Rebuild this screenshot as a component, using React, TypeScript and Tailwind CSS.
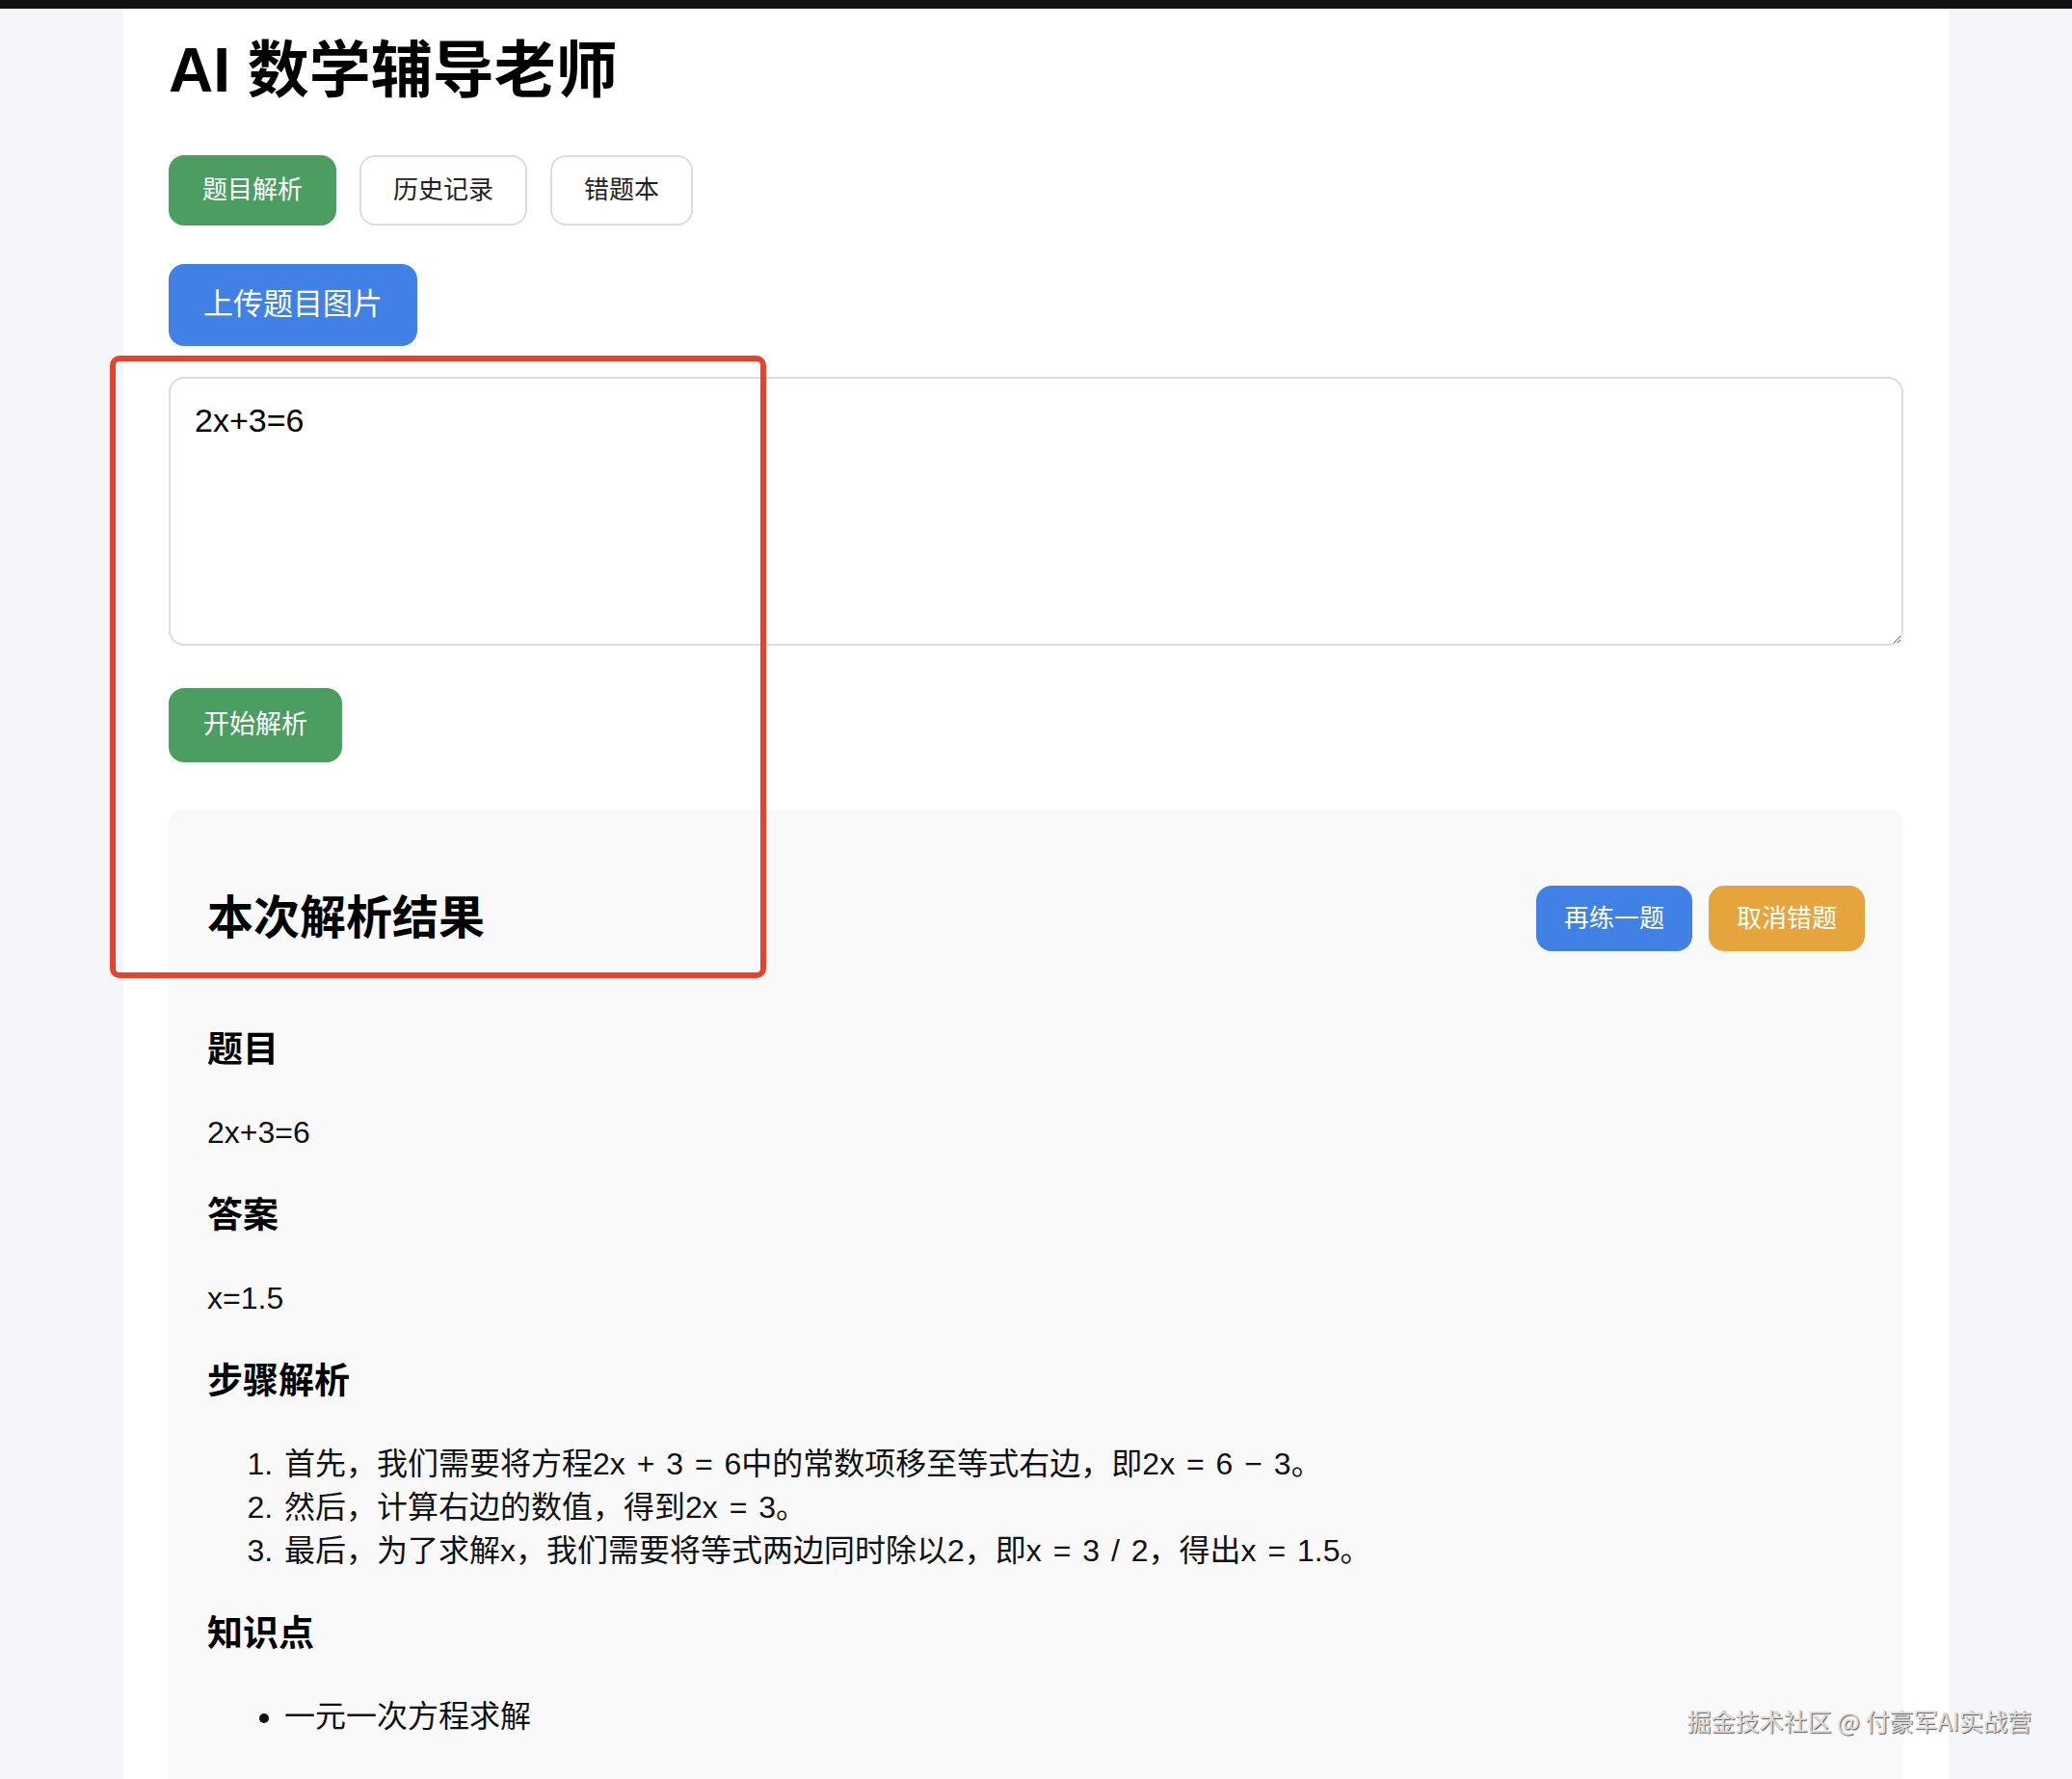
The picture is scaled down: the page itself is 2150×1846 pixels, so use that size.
import { useState } from 'react';

const tabs = ['题目解析', '历史记录', '错题本'];

const steps = [
  '首先，我们需要将方程2x + 3 = 6中的常数项移至等式右边，即2x = 6 − 3。',
  '然后，计算右边的数值，得到2x = 3。',
  '最后，为了求解x，我们需要将等式两边同时除以2，即x = 3 / 2，得出x = 1.5。',
];

export default function App() {
  const [activeTab, setActiveTab] = useState(0);
  const [question, setQuestion] = useState('2x+3=6');

  return (
    <div className="relative min-h-screen bg-[#f5f6f9] font-['Liberation_Sans','Noto_Sans_CJK_SC',sans-serif] text-[#111]">
      <div className="h-[9px] bg-[#111]" />

      <div className="mx-auto w-[1894px] bg-white px-[47px] pt-[26px] pb-[40px]">
        <h1 className="text-[64px] leading-[77px] font-bold text-black">AI 数学辅导老师</h1>

        {/* 顶部标签 */}
        <div className="mt-[49px] flex gap-[24px]">
          {tabs.map((tab, i) => (
            <button
              key={tab}
              onClick={() => setActiveTab(i)}
              className={`flex h-[73px] items-center rounded-[16px] border-2 px-[33px] text-[26px] ${
                activeTab === i
                  ? 'border-[#4c9d62] bg-[#4c9d62] text-white'
                  : 'border-[#dddddd] bg-white text-[#222]'
              }`}
            >
              {tab}
            </button>
          ))}
        </div>

        <button className="mt-[40px] flex h-[85px] items-center rounded-[16px] bg-[#4180e4] px-[36px] text-[31px] text-white">
          上传题目图片
        </button>

        <textarea
          value={question}
          onChange={(e) => setQuestion(e.target.value)}
          className="mt-[32px] block h-[279px] w-full rounded-[16px] border-2 border-[#dddddd] bg-white px-[25px] pt-[21px] text-[34px] leading-[45px] text-black outline-none"
        />

        <button className="mt-[44px] flex h-[77px] items-center rounded-[16px] bg-[#4c9d62] px-[36px] text-[27px] text-white">
          开始解析
        </button>

        {/* 解析结果 */}
        <div className="mt-[49px] rounded-[16px] bg-[#f9f9f9] px-[40px] pt-[79px] pb-[90px]">
          <div className="flex h-[68px] items-center justify-between">
            <h2 className="text-[48px] font-bold text-black">本次解析结果</h2>
            <div className="flex gap-[17px]">
              <button className="flex h-[68px] items-center rounded-[16px] bg-[#4180e4] px-[29px] text-[26px] text-white">
                再练一题
              </button>
              <button className="flex h-[68px] items-center rounded-[16px] bg-[#e6a43c] px-[29px] text-[26px] text-white">
                取消错题
              </button>
            </div>
          </div>

          <div className="mt-[80px] flex flex-col gap-[41px] text-[32px] leading-[45px]">
            <h3 className="text-[37px] font-bold text-black">题目</h3>
            <p>2x+3=6</p>
            <h3 className="text-[37px] font-bold text-black">答案</h3>
            <p>x=1.5</p>
            <h3 className="text-[37px] font-bold text-black">步骤解析</h3>
            <ol className="list-decimal pl-[80px] [word-spacing:3px]">
              {steps.map((s) => (
                <li key={s}>{s}</li>
              ))}
            </ol>
            <h3 className="text-[37px] font-bold text-black">知识点</h3>
            <ul className="list-disc pl-[80px]">
              <li>一元一次方程求解</li>
            </ul>
          </div>
        </div>
      </div>

      {/* 标注框 */}
      <div className="pointer-events-none absolute top-[369px] left-[114px] h-[646px] w-[681px] rounded-[10px] border-[6px] border-[#e5432d]" />

      {/* 水印 */}
      <div className="pointer-events-none absolute top-[1767px] right-[42px] font-['Noto_Sans_CJK_SC',sans-serif] text-[25px] text-[#dcdcdc] [text-shadow:1px_1px_1px_rgba(0,0,0,0.65)]">
        掘金技术社区 @ 付豪军AI实战营
      </div>
    </div>
  );
}
